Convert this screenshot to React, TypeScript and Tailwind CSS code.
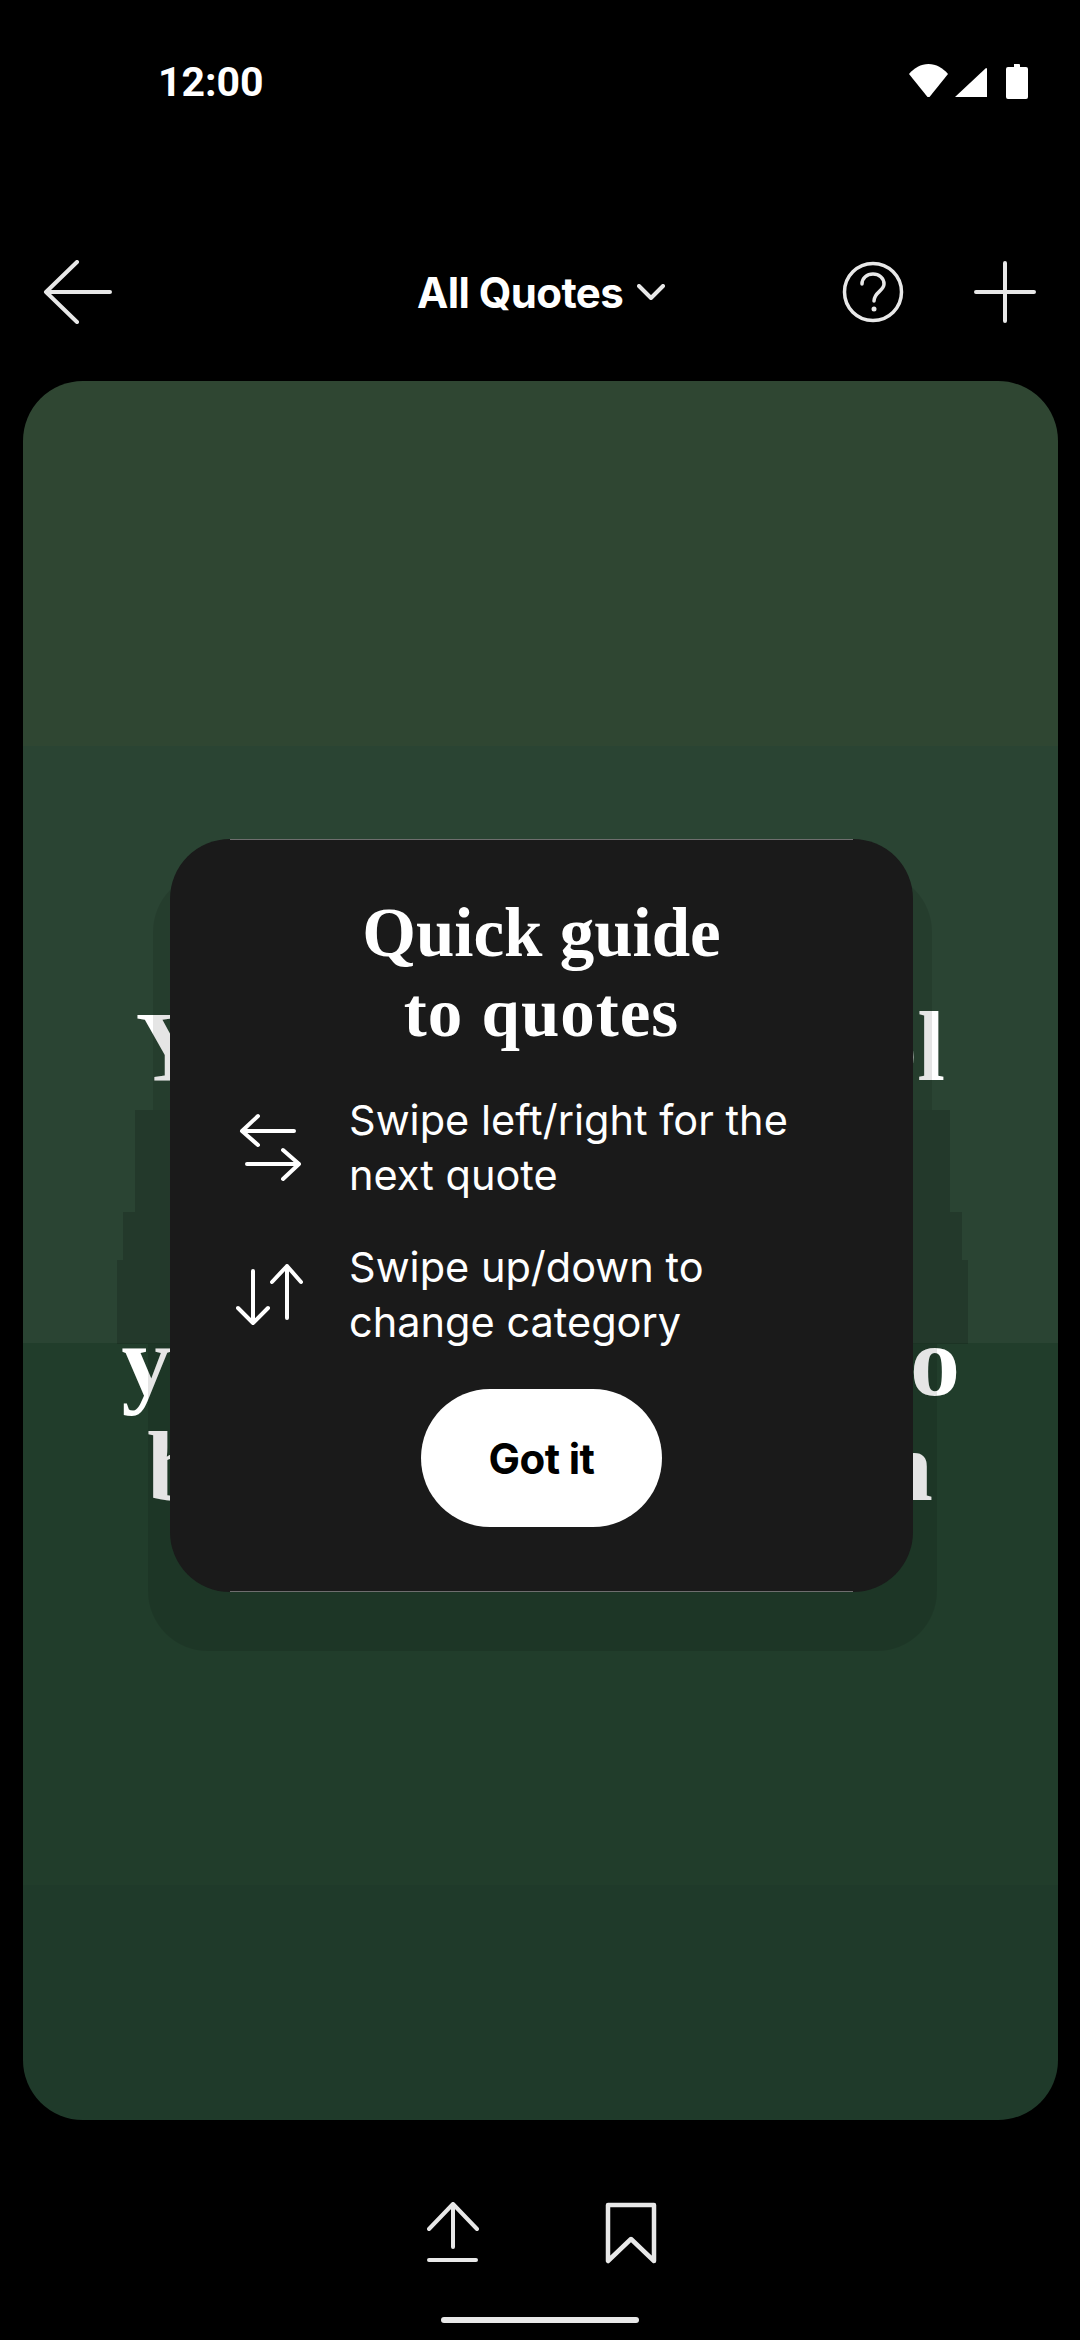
const sans = "font-['Inter','Liberation_Sans',sans-serif]";
const serif = "font-['Liberation_Serif',serif]";

const quoteLines = [
  { text: "You cannot control", style: "" },
  { text: "what life sends to", style: "" },
  { text: "you, but you can,", style: "" },
  { text: "your choices, and to", style: "tracking-[-0.5px]" },
  { text: "be your champion", style: "tracking-[1px]" },
];

const guideRows = [
  {
    lines: ["Swipe left/right for the", "next quote"],
    icon: (
      <svg width="70" height="70" viewBox="0 0 70 70" fill="none" stroke="#fff" strokeWidth="4" strokeLinecap="round" strokeLinejoin="round">
        <path d="M22 3 6 18l16 14M6 18h52" />
        <path d="M47 37l16 14-16 15M63 51H11" />
      </svg>
    ),
  },
  {
    lines: ["Swipe up/down to", "change category"],
    icon: (
      <svg width="70" height="66" viewBox="0 0 70 66" fill="none" stroke="#fff" strokeWidth="4" strokeLinecap="round" strokeLinejoin="round">
        <path d="M17 9v52M2 46l15 15 15-15" />
        <path d="M51 56V4M36 20 51 4l14 16" />
      </svg>
    ),
  },
];

export default function App() {
  return (
    <div className={`w-[1080px] h-[2340px] bg-black flex flex-col text-white overflow-hidden ${sans}`}>
      {/* Status bar */}
      <div className="h-[162px] shrink-0 flex items-center justify-between pl-[158px] pr-[52px]">
        <span className="font-['Roboto',sans-serif] font-bold text-[41px] leading-none mt-[2px]">12:00</span>
        <svg width="120" height="36" viewBox="0 0 120 36" fill="#fff">
          <path d="M1 11C6 5 13 1 20.500 1S35 5 40 11L21.500 34h-2L1 11Z" />
          <path d="M47 34 78 5a1 1 0 0 1 1 1v28H47Z" />
          <path d="M106 1h5a1 1 0 0 1 1 1v2h6a2 2 0 0 1 2 2v28a2 2 0 0 1-2 2h-18a2 2 0 0 1-2-2V6a2 2 0 0 1 2-2h6Z" />
        </svg>
      </div>

      {/* Header */}
      <div className="h-[219px] shrink-0 pt-[41px] pl-[43px] pr-[44px] flex items-center">
        <svg width="70" height="64" viewBox="0 0 70 64" fill="none" stroke="#e8e8e8" strokeWidth="4" strokeLinecap="round" strokeLinejoin="round">
          <path d="M34 2 3 32l31 30M3 32h64" />
        </svg>
        <div className="ml-[304px] flex items-center gap-[14px]">
          <span className="font-bold text-[42px] leading-none tracking-[-0.6px] mt-[2px]">All Quotes</span>
          <svg width="28" height="16" viewBox="0 0 28 16" fill="none" stroke="#e8e8e8" strokeWidth="4" strokeLinecap="round" strokeLinejoin="round">
            <path d="M2 2l12 12L26 2" />
          </svg>
        </div>
        <svg className="ml-auto" width="62" height="62" viewBox="0 0 62 62" fill="none" stroke="#e8e8e8" strokeWidth="3.500" strokeLinecap="round">
          <circle cx="31" cy="31" r="28.500" />
          <path d="M20 23c0-6 5-10 11-10s11 4 11 10c0 7-10 8-10 17" />
          <circle cx="32" cy="48" r="2.500" fill="#e8e8e8" stroke="none" />
        </svg>
        <svg className="ml-[70px]" width="62" height="62" viewBox="0 0 62 62" fill="none" stroke="#e8e8e8" strokeWidth="4" strokeLinecap="round">
          <path d="M31 2v58M2 31h58" />
        </svg>
      </div>

      {/* Quote card */}
      <div className="relative ml-[23px] w-[1035px] h-[1739px] shrink-0 rounded-[60px] overflow-hidden flex flex-col items-center justify-center bg-[linear-gradient(to_bottom,#2f4632_0,#2f4632_365px,#2a4433_365px,#2a4433_962px,#213d2b_962px,#213d2b_1504px,#1f3a2a_1504px)]">
        <div className={`${serif} font-bold text-[100px] leading-[105px] text-center whitespace-nowrap mt-[12px]`}>
          {quoteLines.map((line) => (
            <div key={line.text} className={line.style}>
              {line.text}
            </div>
          ))}
        </div>

        {/* Stepped shadow behind the dialog */}
        <div className="absolute left-[125px] top-[491px] w-[789px] flex flex-col items-center">
          <div className="w-[779px] h-[238px] shrink-0 bg-black/10 rounded-t-[60px]" />
          <div className="w-[815px] h-[102px] shrink-0 bg-black/15" />
          <div className="w-[839px] h-[48px] shrink-0 bg-black/15" />
          <div className="w-[851px] h-[84px] shrink-0 bg-black/15" />
          <div className="w-[789px] h-[307px] shrink-0 bg-black/10 rounded-b-[60px]" />
        </div>

        {/* Quick guide dialog */}
        <div className="absolute left-[147px] top-[458px] w-[743px] h-[753px] bg-[#1a1a1a] rounded-[60px] flex flex-col before:absolute before:left-[60px] before:right-[60px] before:top-0 before:h-px before:bg-[#6e6e6e] after:absolute after:left-[60px] after:right-[60px] after:bottom-0 after:h-px after:bg-[#6e6e6e]">
          <h1 className={`${serif} font-bold text-[69px] leading-[80px] text-center pt-[54px]`}>
            Quick guide
            <br />
            <span className="tracking-[1px]">to quotes</span>
          </h1>
          <div className="mt-[40px] pl-[66px] flex flex-col gap-[37px]">
            {guideRows.map((row) => (
              <div key={row.lines[0]} className="flex items-center gap-[43px]">
                {row.icon}
                <p className="text-[41.500px] leading-[55px] font-normal">
                  {row.lines[0]}
                  <br />
                  {row.lines[1]}
                </p>
              </div>
            ))}
          </div>
          <button className="mt-[39px] mx-auto w-[241px] h-[138px] shrink-0 rounded-full bg-white text-black font-bold text-[42px] tracking-[-0.6px]">
            Got it
          </button>
        </div>
      </div>

      {/* Bottom actions */}
      <div className="flex-1 flex flex-col items-center">
        <div className="mt-[82px] ml-[4px] flex items-start gap-[126px]">
          <svg width="52" height="60" viewBox="0 0 52 60" fill="none" stroke="#e8e8e8" strokeWidth="4" strokeLinecap="round" strokeLinejoin="round">
            <path d="M2 27 26 2l24 25M26 2v43M2 58h47" />
          </svg>
          <svg width="52" height="62" viewBox="0 0 52 62" fill="none" stroke="#e8e8e8" strokeWidth="4.500" strokeLinecap="round" strokeLinejoin="round">
            <path d="M3 3h46v56L26 37 3 59V3Z" />
          </svg>
        </div>
        <div className="mt-[53px] w-[198px] h-[6px] rounded-full bg-[#e8e8e8]" />
      </div>
    </div>
  );
}
